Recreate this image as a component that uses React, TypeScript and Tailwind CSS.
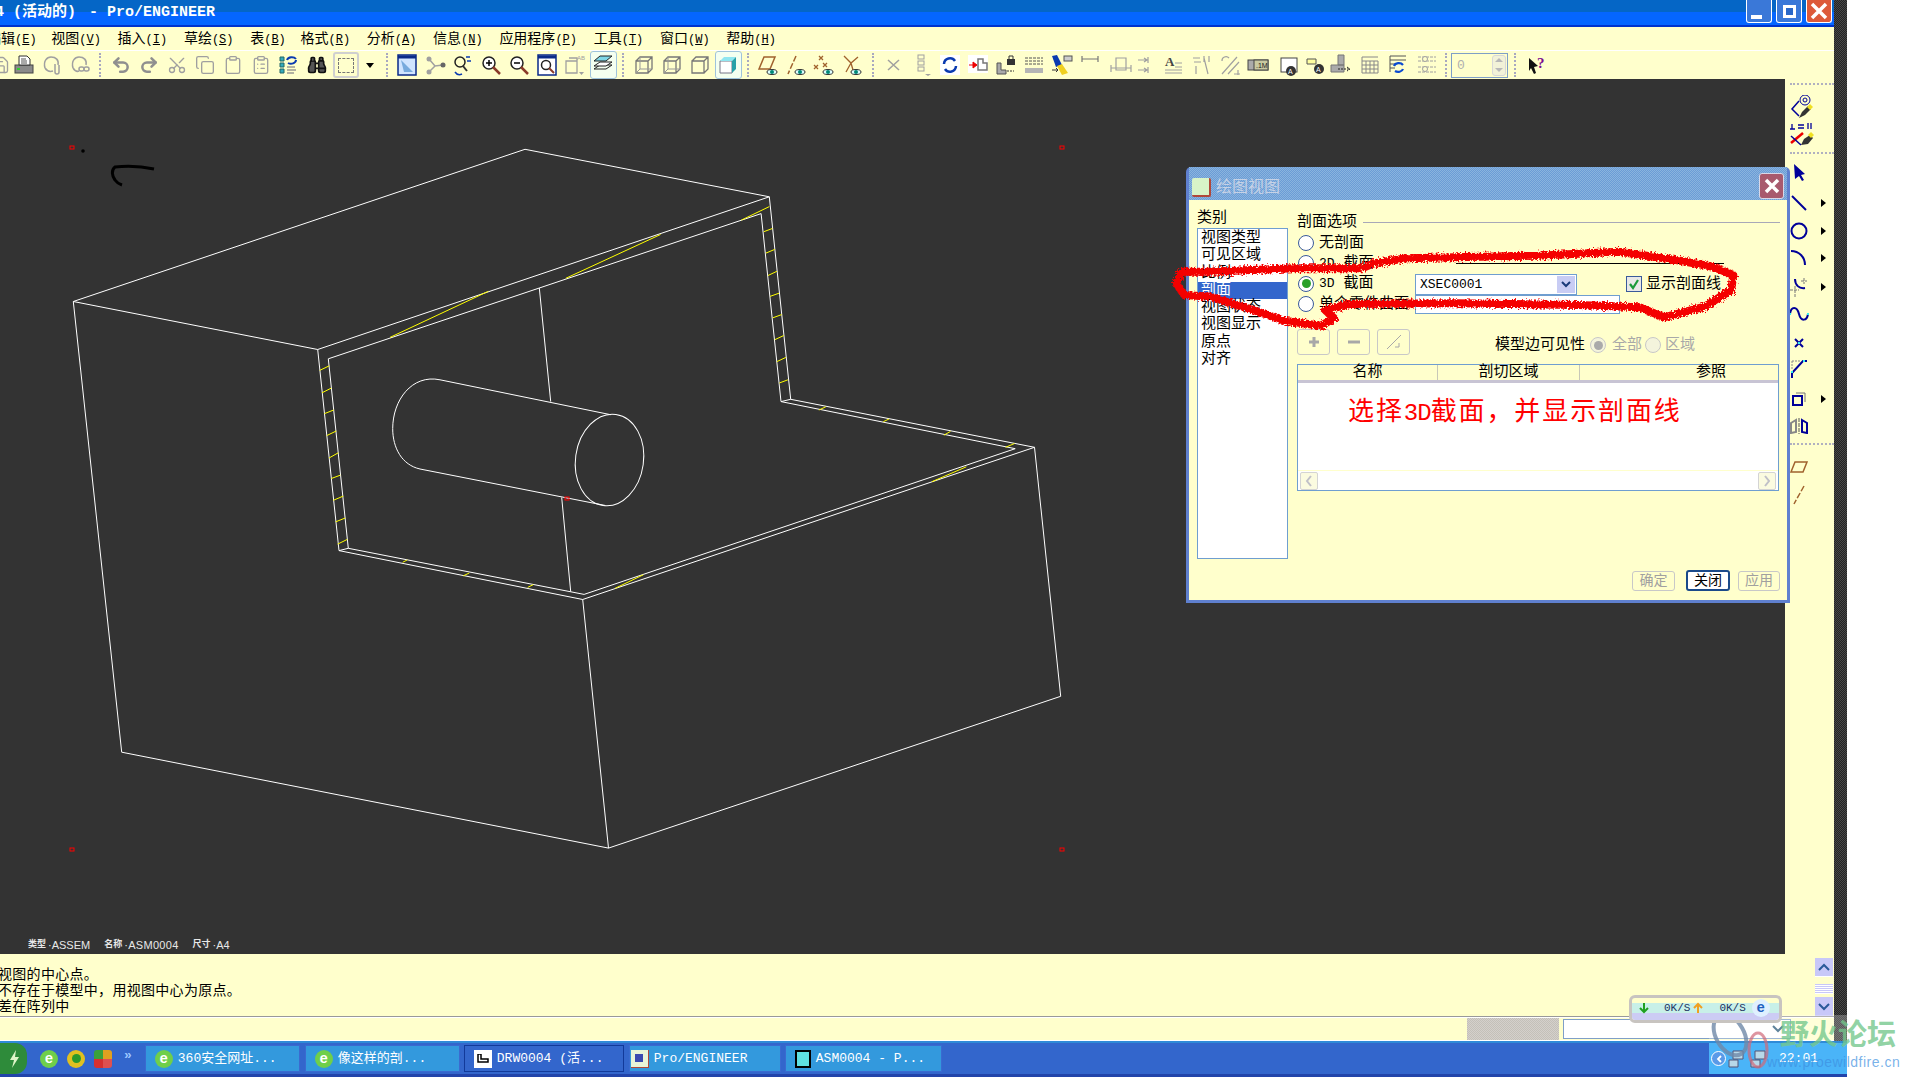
import type { ReactNode } from 'react'
import { Binoculars, ClipboardList, Clipboard, Copy, Redo2, Save, Scissors, Undo2 } from 'lucide-react'

// raw points were read off the zoomed crops, so keep the crop mapping
const a = (x: number, y: number) => `${(60 + x / 3).toFixed(1)},${(140 + y / 2.148).toFixed(1)}`
const b = (x: number, y: number) => `${(540 + x / 2.904).toFixed(1)},${(140 + y / 2.148).toFixed(1)}`

const whiteLines = [
  [a(40, 347), a(1395, 20), b(666, 122), b(728, 557), b(1436, 660), b(124, 987)],
  [a(40, 347), a(773, 450), b(666, 122)],
  [a(40, 347), a(185, 1315), b(199, 1521), b(1512, 1195), b(1436, 660)],
  [a(773, 450), a(837, 882), b(124, 987), b(199, 1521)],
  [a(805, 470), b(642, 158), b(700, 562), b(1380, 663), b(128, 976), a(865, 877), a(805, 470)],
  [a(837, 882), a(865, 877)],
  [b(700, 562), b(728, 557)],
  [a(1438, 318), a(1472, 562)],
  [a(1505, 768), a(1532, 970)],
]

const yellowLines = [
  [a(990, 424), a(1285, 325)],
  [b(75, 297), b(350, 203)],
  [b(585, 172), b(666, 143)],
  [a(779, 495), a(808, 485)],
  [a(786, 543), a(814, 533)],
  [a(793, 588), a(821, 580)],
  [a(800, 635), a(829, 625)],
  [a(807, 683), a(835, 672)],
  [a(814, 727), a(841, 720)],
  [a(820, 774), a(850, 765)],
  [a(827, 820), a(856, 812)],
  [a(833, 868), a(862, 858)],
  [a(1028, 907), a(1042, 902)],
  [a(1210, 936), a(1228, 930)],
  [a(1403, 961), a(1420, 955)],
  [b(650, 197), b(675, 190)],
  [b(656, 243), b(682, 235)],
  [b(662, 291), b(688, 282)],
  [b(668, 336), b(694, 329)],
  [b(676, 382), b(702, 375)],
  [b(682, 429), b(708, 420)],
  [b(688, 476), b(714, 467)],
  [b(695, 522), b(720, 515)],
  [b(810, 580), b(830, 573)],
  [b(997, 605), b(1014, 599)],
  [b(1173, 634), b(1192, 626)],
  [b(1352, 660), b(1378, 652)],
  [b(1138, 734), b(1238, 702)],
  [b(218, 963), b(300, 934)],
]

const scribble = [
  [470, 325], [300, 325], [100, 335], [30, 335], [15, 370], [35, 405], [100, 410], [190, 445], [280, 482], [370, 497], [402, 475], [380, 450],
  [440, 432], [700, 430], [1000, 435], [1150, 442], [1210, 472], [1310, 440], [1375, 390], [1380, 345], [1330, 320], [1240, 300], [1100, 275],
  [900, 287], [700, 292], [580, 295], [500, 310], [470, 325],
]
  .map(([x, y]) => `${(1170 + x / 2.45).toFixed(1)},${(160 + y / 3).toFixed(1)}`)
  .join(' ')

function Ic({ children, w = 22, h = 22 }: { children: ReactNode; w?: number; h?: number }) {
  return (
    <svg width={w} height={h} viewBox={`0 0 ${w} ${h}`} fill="none" className="shrink-0">
      {children}
    </svg>
  )
}

const G = '#a0a0a0'
const BROWN = '#a0622d'
const NAVY = '#000099'
const eye = (
  <g>
    <ellipse cx="15" cy="18" rx="5" ry="2.5" fill="#dff" stroke="#333" />
    <circle cx="15" cy="18" r="2" fill="#087" />
  </g>
)
const lens = (
  <g>
    <circle cx="9" cy="9" r="6" fill="#fff" stroke="#222" strokeWidth="1.5" />
    <path d="M13 13l7 7" stroke="#8a3b2a" strokeWidth="2.5" />
  </g>
)

function Slot({ children, w = 'w-7' }: { children: ReactNode; w?: string }) {
  return <div className={`flex h-full shrink-0 items-center justify-center ${w}`}>{children}</div>
}

function Sep({ m = 'mx-[6px]' }: { m?: string }) {
  return <div className={`h-[24px] w-[2px] shrink-0 border-l-2 border-dotted border-[#a8a8c0] ${m}`} />
}

function Toolbar() {
  const g = { size: 20, color: G, strokeWidth: 1.6 }
  return (
    <div className="flex h-[28px] items-center overflow-hidden bg-[#ffffcc]">
      <div className="w-[10px] shrink-0 overflow-hidden">
        <Save {...g} className="-ml-[10px]" />
      </div>
      <Slot w="w-[28px]">
        <Ic>
          <rect x="2" y="11" width="18" height="8" fill="#8a8a8a" stroke="#444" />
          <path d="M6 11V2h8l3 3v6z" fill="#fff" stroke="#333" />
          <path d="M8 5h5M8 7h6M8 9h6" stroke="#555" />
          <rect x="4" y="14" width="3" height="2" fill="#3c3" />
        </Ic>
      </Slot>
      <Slot>
        <Ic>
          <path d="M4 14C2 7 6 3 10 3c5 0 8 3 7 8" stroke={G} strokeWidth="1.5" />
          <path d="M14 10v8a2 2 0 004 0v-7" stroke={G} strokeWidth="1.5" />
          <path d="M4 14c2 3 5 4 8 3" stroke={G} strokeWidth="1.5" />
        </Ic>
      </Slot>
      <Slot>
        <Ic>
          <path d="M4 14C2 7 6 3 10 3c5 0 8 3 7 8" stroke={G} strokeWidth="1.5" />
          <rect x="10" y="13" width="5" height="4" rx="2" stroke={G} strokeWidth="1.5" />
          <rect x="15" y="13" width="5" height="4" rx="2" stroke={G} strokeWidth="1.5" />
          <path d="M4 14c2 3 4 4 6 3" stroke={G} strokeWidth="1.5" />
        </Ic>
      </Slot>
      <Sep m="ml-[5px] mr-[6px]" />
      <Slot>
        <Undo2 size={20} color="#8f8f8f" strokeWidth={3} />
      </Slot>
      <Slot>
        <Redo2 size={20} color="#8f8f8f" strokeWidth={3} />
      </Slot>
      <Slot>
        <Scissors {...g} className="-rotate-90" />
      </Slot>
      <Slot>
        <Copy {...g} />
      </Slot>
      <Slot>
        <Clipboard {...g} />
      </Slot>
      <Slot>
        <ClipboardList {...g} />
      </Slot>
      <Slot>
        <Ic>
          <path d="M2 3h4v4H2zM2 9h4v4H2zM2 15h4v4H2z" fill="#3ab" stroke="#266" />
          <path d="M9 13h8M9 16h9M9 19h7" stroke="#667" />
          <path d="M9 6a5 4 0 019-1M18 6a5 4 0 01-8 3" stroke="#0a3ab0" strokeWidth="2" />
        </Ic>
      </Slot>
      <Slot>
        <Binoculars size={20} color="#111" fill="#555" strokeWidth={2} />
      </Slot>
      <Slot w="w-[30px]">
        <div className="flex h-[26px] w-[26px] items-center justify-center rounded-[3px] border-2 border-[#d0d0d0]">
          <div className="h-[15px] w-[16px] border border-dashed border-[#777]" />
        </div>
      </Slot>
      <Slot w="w-[18px]">
        <span className="h-0 w-0 border-x-[4px] border-t-[5px] border-x-transparent border-t-black" />
      </Slot>
      <Sep m="ml-[7px] mr-[5px]" />
      <Slot>
        <Ic>
          <rect x="2" y="1" width="18" height="20" fill="#cfe4ff" stroke="#0a2a88" strokeWidth="1.5" />
          <path d="M2 3h18" stroke="#0a2a88" strokeWidth="3" />
          <path d="M5 6l12 12H8z" fill="#7ad" />
        </Ic>
      </Slot>
      <Slot>
        <Ic>
          <path d="M5 5l6 7 8-1M11 12l-6 6" stroke={G} strokeWidth="1.5" />
          <circle cx="5" cy="5" r="2.5" fill={G} />
          <circle cx="5" cy="18" r="2.5" fill={G} />
          <circle cx="19" cy="11" r="2.5" fill="#666" />
        </Ic>
      </Slot>
      <Slot>
        <Ic>
          <circle cx="8" cy="8" r="5" stroke="#222" strokeWidth="1.5" />
          <path d="M11 12l4 5" stroke="#333" strokeWidth="2" />
          <path d="M14 3h4M15 7h4M3 18c2 3 5 3 7 2" stroke="#0a3ab0" strokeWidth="1.5" />
        </Ic>
      </Slot>
      <Slot>
        <Ic>
          {lens}
          <path d="M6 9h6M9 6v6" stroke="#000" strokeWidth="1.5" />
        </Ic>
      </Slot>
      <Slot>
        <Ic>
          {lens}
          <path d="M6 9h6" stroke="#000" strokeWidth="1.5" />
        </Ic>
      </Slot>
      <Slot>
        <Ic>
          <rect x="2" y="1" width="18" height="20" fill="#fff" stroke="#0a2a88" strokeWidth="1.5" />
          <path d="M2 3h18" stroke="#0a2a88" strokeWidth="3" />
          <circle cx="10" cy="11" r="4.5" fill="#fff" stroke="#222" strokeWidth="1.5" />
          <path d="M13 14l5 5" stroke="#8a3b2a" strokeWidth="2" />
        </Ic>
      </Slot>
      <Slot>
        <Ic>
          <path d="M2 7h11v12H2zM5 4h8v3" stroke={G} strokeWidth="1.3" />
          <text x="13" y="6" fontSize="6" fill={G} fontFamily="Liberation Sans">AB</text>
          <path d="M15 18h5l-2.500 3z" fill={G} />
        </Ic>
      </Slot>
      <Slot>
        <div className="flex h-[28px] w-[27px] items-center justify-center rounded-[3px] border border-[#9fc3dc] bg-[#f4fff0]">
          <Ic>
            <path d="M2 15l6-4h12l-6 4z" stroke="#222" />
            <path d="M2 12l6-4h12l-6 4z" fill="#fff" stroke="#222" />
            <path d="M2 7l6-5h12l-6 5z" fill="#7fd6e6" stroke="#222" />
          </Ic>
        </div>
      </Slot>
      <Sep m="ml-[5px] mr-[6px]" />
      {[0, 1, 2].map((i) => (
        <Slot key={i}>
          <Ic>
            <path d="M3 7h12v12H3zM3 7l4-4h12v12l-4 4M15 7l4-4" stroke="#777" strokeWidth="1.3" />
            {i < 2 ? <path d="M7 3v12h12M7 15l-4 4" stroke="#999" /> : null}
          </Ic>
        </Slot>
      ))}
      <Slot>
        <div className="flex h-[28px] w-[27px] items-center justify-center rounded-[3px] border border-[#9fc3dc] bg-[#f4fff0]">
          <Ic>
            <path d="M3 7h12v12H3z" fill="#fff" stroke="#778" />
            <path d="M3 7l4-4h12l-4 4z" fill="#8fe6f0" />
            <path d="M15 7l4-4v12l-4 4z" fill="#27a0a8" />
          </Ic>
        </div>
      </Slot>
      <Sep m="mx-[5px]" />
      <Slot>
        <Ic>
          <path d="M7 3h11l-5 12H2z" stroke={BROWN} strokeWidth="1.500" />
          {eye}
        </Ic>
      </Slot>
      <Slot>
        <Ic>
          <path d="M11 2L3 20" stroke={BROWN} strokeWidth="1.500" strokeDasharray="6 2" />
          {eye}
        </Ic>
      </Slot>
      <Slot>
        <Ic>
          <path d="M6 2l4 4M10 2L6 6M10 9l4 4M14 9l-4 4M1 11l4 4M5 11l-4 4" stroke={BROWN} strokeWidth="1.300" />
          {eye}
        </Ic>
      </Slot>
      <Slot>
        <Ic>
          <path d="M3 2l7 7 7-6M10 9l-5 9M10 9l2 7" stroke={BROWN} strokeWidth="1.300" />
          {eye}
        </Ic>
      </Slot>
      <Sep m="mx-[6px]" />
      <Slot>
        <Ic>
          <path d="M5 6l11 10M16 6L5 16" stroke={G} strokeWidth="1.500" />
        </Ic>
      </Slot>
      <Slot>
        <Ic>
          <rect x="7" y="1" width="6" height="4" stroke={G} />
          <rect x="7" y="7" width="6" height="4" stroke={G} />
          <rect x="7" y="13" width="6" height="4" stroke={G} />
          <path d="M14 20h6l-3 2z" fill={G} />
        </Ic>
      </Slot>
      <Slot>
        <Ic w={20} h={20}>
          <rect width="20" height="20" fill="#fff" />
          <path d="M4 9a6 6 0 0111-3M16 11a6 6 0 01-11 3" stroke="#0a3ab0" strokeWidth="2.500" />
        </Ic>
      </Slot>
      <Slot>
        <Ic w={20} h={20}>
          <rect width="20" height="18" fill="#fff" />
          <path d="M10 4h5v4h4v7H10z" stroke="#777" strokeWidth="1.500" />
          <path d="M1 10h6M5 7l4 3-4 3z" fill="#e00" stroke="#e00" />
        </Ic>
      </Slot>
      <Slot>
        <Ic>
          <path d="M2 9v11h9v-4H6V9z" fill="#aaa" stroke="#555" />
          <rect x="12" y="5" width="8" height="6" fill="#333" />
          <path d="M14 5V2h4v3" stroke="#333" />
          <path d="M12 17h7" stroke="#333" strokeDasharray="2 1" />
        </Ic>
      </Slot>
      <Slot>
        <Ic>
          <path d="M2 4h18M2 7h18M2 10h18" stroke="#555" strokeDasharray="3 1" />
          <rect x="2" y="14" width="18" height="5" fill="#b5b5b5" />
        </Ic>
      </Slot>
      <Slot>
        <Ic>
          <path d="M1 2l5-1 5 10-6 2z" fill="#0a3ab0" />
          <path d="M6 12l5-2 6 9-6 2z" fill="#f0d020" />
          <rect x="13" y="2" width="8" height="5" fill="#ccc" stroke="#555" />
          <path d="M1 16h6M5 14l2 2-2 2" stroke="#333" />
        </Ic>
      </Slot>
      <Slot w="w-[28px]">
        <Ic>
          <path d="M3 5h16M3 2v6M19 2v6" stroke="#777" strokeWidth="1.200" />
        </Ic>
      </Slot>
      <Slot w="w-[34px]">
        <Ic>
          <path d="M1 14h20M1 11v7M21 11v7M6 4h10v12H6z" stroke={G} strokeWidth="1.200" />
        </Ic>
      </Slot>
      <Slot w="w-[10px]">
        <Ic w={12} h={20}>
          <path d="M1 5h9M1 15h9M11 2v6M11 12v6M7 3l3 2-3 2M7 13l3 2-3 2" stroke={G} strokeWidth="1.200" />
        </Ic>
      </Slot>
      <Slot w="w-[24px] ml-[12px]">
        <Ic>
          <text x="4" y="12" fontSize="13" fontWeight="bold" fill="#444" fontFamily="Liberation Serif">A</text>
          <path d="M14 9h7M14 13h7M4 16h17M4 19h17" stroke={G} />
        </Ic>
      </Slot>
      <Slot w="w-[36px]">
        <Ic>
          <path d="M2 4h7M3 8h7M5 12v8M13 4l4 16M13 2v6M18 2v6" stroke={G} strokeWidth="1.200" />
        </Ic>
      </Slot>
      <Slot w="w-[20px]">
        <Ic>
          <path d="M3 20L18 3M9 20L20 8M3 7a4 4 0 017-3M15 20h6M19 16v5" stroke={G} strokeWidth="1.200" />
        </Ic>
      </Slot>
      <Slot w="w-[36px]">
        <Ic>
          <rect x="1" y="6" width="20" height="10" fill="#aaa" stroke="#444" />
          <rect x="7" y="6" width="14" height="10" fill="#c9c9a0" stroke="#444" />
          <text x="9" y="14" fontSize="7" fill="#222" fontFamily="Liberation Sans">.1M</text>
        </Ic>
      </Slot>
      <Slot w="w-[28px]">
        <Ic>
          <rect x="2" y="4" width="16" height="14" fill="#fff" stroke="#444" />
          <circle cx="12" cy="17" r="5" fill="#333" />
          <text x="9" y="20" fontSize="7" fill="#fff" fontFamily="Liberation Sans">A</text>
        </Ic>
      </Slot>
      <Slot w="w-[22px]">
        <Ic>
          <path d="M3 5h9v5H3z" fill="#ffffa0" stroke="#555" />
          <circle cx="15" cy="15" r="5" fill="#333" />
          <text x="12" y="18" fontSize="7" fill="#fff" fontFamily="Liberation Sans">A</text>
        </Ic>
      </Slot>
      <Slot w="w-[30px]">
        <Ic>
          <path d="M8 1h6v10h-6zM1 11h13v7H1z" fill="#aaa" stroke="#777" />
          <path d="M8 15h11M17 13l3 2-3 2" stroke="#222" strokeDasharray="2 1" />
        </Ic>
      </Slot>
      <Slot w="w-[28px]">
        <Ic w={18} h={18}>
          <path d="M1 1h16M1 17V1M5 5v12M9 5v12M13 5v12M17 5v12M1 5h16M1 9h16M1 13h16M1 17h16" stroke="#888" />
        </Ic>
      </Slot>
      <Slot w="w-[28px]">
        <Ic w={18} h={20}>
          <path d="M1 1h16M1 17V1M1 5h16M1 9h5M1 13h5" stroke="#555" />
          <path d="M5 11a5 4 0 019-1M14 14a5 4 0 01-8 2" stroke="#0a4ad0" strokeWidth="2.200" />
        </Ic>
      </Slot>
      <Slot w="w-[30px]">
        <Ic>
          <path d="M2 3h18M2 7h18M2 13h18M2 18h18" stroke={G} strokeDasharray="3 1" />
          <circle cx="9" cy="5" r="2.500" fill="#ffffcc" stroke={G} />
          <circle cx="9" cy="15" r="2.500" fill="#ffffcc" stroke={G} />
        </Ic>
      </Slot>
      <Sep m="ml-[3px] mr-[4px]" />
      <div className="flex h-[25px] w-[57px] shrink-0 items-center justify-between border border-[#7f9fc8] pr-[1px] pl-[5px] text-[13px] text-[#b0b0b0]">
        0
        <div className="flex h-[21px] w-[14px] flex-col items-center justify-around rounded-[3px] border border-[#d8d8d8] bg-[#f2f2d8]">
          <span className="h-0 w-0 border-x-[4px] border-b-[4px] border-x-transparent border-b-[#b8b8b8]" />
          <span className="h-0 w-0 border-x-[4px] border-t-[4px] border-x-transparent border-t-[#b8b8b8]" />
        </div>
      </div>
      <Sep m="mx-[6px]" />
      <div className="ml-[5px]">
        <Ic w={20} h={20}>
          <path d="M2 3l9 8-4 1 2 6-2 1-3-6-2 3z" fill="#111" />
          <text x="10" y="13" fontSize="15" fontWeight="bold" fill="#7a0a90" fontFamily="Liberation Serif">?</text>
        </Ic>
      </div>
    </div>
  )
}

const menus: [string, string][] = [
  ['视图', 'V'],
  ['插入', 'I'],
  ['草绘', 'S'],
  ['表', 'B'],
  ['格式', 'R'],
  ['分析', 'A'],
  ['信息', 'N'],
  ['应用程序', 'P'],
  ['工具', 'T'],
  ['窗口', 'W'],
  ['帮助', 'H'],
]

function MenuLabel({ text, k }: { text: string; k: string }) {
  return (
    <span className={k === 'B' ? '-mr-[2px] whitespace-nowrap' : 'whitespace-nowrap'}>
      {text}
      <span className="text-[12px]">
        (<span className="underline">{k}</span>)
      </span>
    </span>
  )
}

function Radio({ on, off }: { on?: boolean; off?: boolean }) {
  return (
    <span
      className={`flex h-[16px] w-[16px] shrink-0 items-center justify-center rounded-full border ${
        off ? 'border-[#c8c8c8] bg-[#f4f4dc]' : 'border-[#3a5a9a] bg-white'
      }`}
    >
      {on ? <span className={`h-[9px] w-[9px] rounded-full ${off ? 'bg-[#aaa]' : 'bg-[#2aa02a]'}`} /> : null}
    </span>
  )
}

const listItems = ['视图类型', '可见区域', '比例', '剖面', '视图状态', '视图显示', '原点', '对齐']

function Dialog() {
  return (
    <div className="absolute top-[167px] left-[1186px] flex h-[436px] w-[604px] flex-col rounded-t-[5px] border-x-[3px] border-b-[3px] border-[#5f80cf] bg-[#ffffcc] text-[15px] text-black">
      <div className="flex h-[33px] shrink-0 items-center bg-[repeating-conic-gradient(#6b9cd6_0_25%,#8ab4de_0_50%)] bg-[length:2px_2px] pt-[5px] pl-[3px]">
        <span className="mt-[2px] h-[19px] w-[19px] rounded-[2px] border-r-2 border-b-2 border-[#b0483a] bg-[#d8f4c8]" />
        <span className="mt-[3px] ml-[5px] text-[16px] text-[#c6d2e6]">绘图视图</span>
        <span className="mr-[3px] ml-auto flex h-[26px] w-[25px] items-center justify-center rounded-[3px] border border-[#d8d8e8] bg-[#a85a6e]">
          <svg width="18" height="18" viewBox="0 0 18 18">
            <path d="M3 3l12 12M15 3L3 15" stroke="#fff" strokeWidth="3.500" />
          </svg>
        </span>
      </div>
      <div className="flex flex-1 pl-[8px]">
        <div className="mt-[8px] w-[91px] shrink-0">
          <div className="h-[20px] pt-px leading-[20px]">类别</div>
          <div className="h-[331px] border border-[#6f9ed0] bg-white pt-px leading-[17.300px]">
            {listItems.map((t, i) => (
              <div key={t} className={i === 3 ? 'bg-[#3366cc] pl-[3px] text-white' : 'pl-[3px]'}>
                {t}
              </div>
            ))}
          </div>
        </div>
        <div className="ml-[9px] w-[483px]">
          <div className="mt-[13px] flex h-[20px] items-center pb-[2px]">
            剖面选项
            <div className="ml-[6px] h-0 flex-1 border-t border-[#a8a8b8]" />
          </div>
          <div className="flex h-[20px] items-center pl-[1px]">
            <Radio />
            <span className="ml-[5px]">无剖面</span>
          </div>
          <div className="relative flex h-[20px] items-center pl-[1px]">
            <Radio />
            <span className="ml-[5px]">
              <span className="text-[13px]">2D</span> 截面
            </span>
            <div className="absolute top-[10px] left-[159px] w-[268px] border-t border-black" />
          </div>
          <div className="flex h-[21px] items-center pl-[1px]">
            <Radio on />
            <span className="ml-[5px] w-[96px]">
              <span className="text-[13px]">3D</span> 截面
            </span>
            <div className="mt-[2px] flex h-[21px] w-[162px] items-center justify-between border border-[#6f9ed0] bg-white pr-px pl-[4px] text-[13px]">
              XSEC0001
              <span className="flex h-[17px] w-[18px] items-center justify-center bg-[#c8ccf4]">
                <svg width="10" height="8" viewBox="0 0 10 8">
                  <path d="M1 1l4 4 4-4" stroke="#1a3a7a" strokeWidth="2" fill="none" />
                </svg>
              </span>
            </div>
            <span className="mt-px ml-[49px] flex h-[16px] w-[16px] items-center justify-center border border-[#3a5a9a] bg-[#e8e8e8]">
              <svg width="12" height="12" viewBox="0 0 12 12">
                <path d="M2 6l3 4 5-8" stroke="#1a9a3a" strokeWidth="2.200" fill="none" />
              </svg>
            </span>
            <span className="mt-px ml-[4px]">显示剖面线</span>
          </div>
          <div className="flex h-[20px] items-center pl-[1px]">
            <Radio />
            <span className="ml-[5px] w-[96px] whitespace-nowrap">单个零件曲面</span>
            <div className="h-[19px] w-[205px] border border-[#6f9ed0] bg-white" />
          </div>
          <div className="mt-[15px] flex h-[26px] items-center">
            <span className="flex h-[26px] w-[33px] items-center justify-center rounded-[3px] border border-[#c8c8c8] text-[#a0a0a0]">
              <svg width="12" height="12" viewBox="0 0 12 12">
                <path d="M6 1v10M1 6h10" stroke="#a8a8a8" strokeWidth="3" />
              </svg>
            </span>
            <span className="ml-[7px] flex h-[26px] w-[33px] items-center justify-center rounded-[3px] border border-[#c8c8c8]">
              <svg width="12" height="6" viewBox="0 0 12 6">
                <path d="M0 3h12" stroke="#a8a8a8" strokeWidth="3" />
              </svg>
            </span>
            <span className="ml-[7px] flex h-[26px] w-[33px] items-center justify-center rounded-[3px] border border-[#c8c8c8]">
              <svg width="18" height="18" viewBox="0 0 18 18">
                <path d="M2 16L16 2M10 14h4v-4" stroke="#a8a8a8" fill="none" />
              </svg>
            </span>
            <div className="flex items-center pt-[6px]">
              <span className="ml-[85px]">模型边可见性</span>
              <span className="ml-[5px]">
                <Radio on off />
              </span>
              <span className="ml-[6px] text-[#a8a8a8]">全部</span>
              <span className="ml-[3px]">
                <Radio off />
              </span>
              <span className="ml-[4px] text-[#a8a8a8]">区域</span>
            </div>
          </div>
          <div className="mt-[9px] flex h-[127px] w-[482px] flex-col border border-[#6f9ed0]">
            <div className="flex h-[18px] shrink-0 items-center border-b-[3px] border-[#c8c4d4] text-center leading-none">
              <span className="w-[140px] border-r border-[#c8c8b8]">名称</span>
              <span className="w-[142px] border-r border-[#c8c8b8]">剖切区域</span>
              <span className="flex-1 pl-[64px]">参照</span>
            </div>
            <div className="flex-1 bg-white pt-[14px] pl-[50px] text-[26px] leading-[32px] tracking-[1.900px] whitespace-nowrap text-[#ff0000]">
              选择<span className="text-[24px] tracking-[-1px]">3D</span>截面，并显示剖面线
            </div>
            <div className="flex h-[20px] shrink-0 items-center justify-between border-t border-[#ffffcc] bg-white px-[2px]">
              {['M7 2L3 7l4 5', 'M3 2l4 5-4 5'].map((d) => (
                <span key={d} className="flex h-[18px] w-[18px] items-center justify-center rounded-[2px] border border-[#d4d4d4] bg-[#fbfbe0]">
                  <svg width="10" height="14" viewBox="0 0 10 14">
                    <path d={d} stroke="#c0c0c8" strokeWidth="2" fill="none" />
                  </svg>
                </span>
              ))}
            </div>
          </div>
          <div className="mt-[79px] flex items-center justify-end text-[14px]">
            <span className="flex h-[20px] w-[43px] items-center justify-center rounded-[3px] border border-[#c8c8c8] text-[#a0a0a0]">确定</span>
            <span className="ml-[11px] flex h-[21px] w-[44px] items-center justify-center rounded-[3px] border-2 border-[#1a4a8a] bg-white">关闭</span>
            <span className="ml-[8px] flex h-[20px] w-[42px] items-center justify-center rounded-[3px] border border-[#c8c8c8] text-[#a0a0a0]">应用</span>
          </div>
        </div>
      </div>
    </div>
  )
}

function SideRow({ children, arrow, m = '' }: { children: ReactNode; arrow?: boolean; m?: string }) {
  return (
    <div className={`flex h-7 items-center ${m}`}>
      <span className="flex w-[22px] justify-center">{children}</span>
      {arrow ? <span className="ml-[11px] h-0 w-0 border-y-[4px] border-l-[5px] border-y-transparent border-l-black" /> : null}
    </div>
  )
}

function SideDots() {
  return <div className="ml-[2px] w-[44px] border-t-2 border-dotted border-[#b0b0c0]" />
}

function RightBar() {
  const st = { stroke: NAVY, strokeWidth: 2, fill: 'none' }
  return (
    <div className="flex w-[49px] shrink-0 flex-col items-start bg-[#ffffcc] pl-[3px]">
      <div className="mt-[4px]">
        <SideDots />
      </div>
      <div className="mt-[10px] ml-[2px]">
        <svg width="24" height="24" viewBox="0 0 24 24" fill="none">
          <path d="M9 6L2 14l7 7" stroke={NAVY} strokeWidth="1.500" />
          <circle cx="15" cy="5" r="5" stroke={NAVY} />
          <circle cx="15" cy="5" r="2" stroke={NAVY} />
          <path d="M9 23l3-6 6-6 3 3-6 6z" fill="#333" />
          <path d="M17 12l3-3 3 3-3 3z" fill="#f0e020" />
        </svg>
      </div>
      <div className="mt-[3px] ml-[2px]">
        <svg width="24" height="24" viewBox="0 0 24 24" fill="none">
          <path d="M2 2v5M0 7h5M8 3h6M8 6h6M18 1v6M21 1v6" stroke={NAVY} strokeWidth="1.300" />
          <path d="M1 21L13 11" stroke="#e00" strokeWidth="2.500" />
          <path d="M1 14l10 9" stroke={NAVY} strokeWidth="1.500" />
          <path d="M11 23l3-6 6-4 3 3-5 6z" fill="#333" />
          <path d="M18 13l3-3 3 3-3 3z" fill="#f0e020" />
        </svg>
      </div>
      <div className="mt-[6px]">
        <SideDots />
      </div>
      <div className="mt-[4px] flex flex-col">
        <SideRow>
          <svg width="14" height="18" viewBox="0 0 14 18">
            <path d="M2 1l11 10-4 1 3 5-2 1-3-5-4 3z" fill={NAVY} />
          </svg>
        </SideRow>
        <SideRow arrow m="mt-[3px]">
          <svg width="18" height="18" viewBox="0 0 18 18">
            <path d="M2 2l14 14" {...st} />
          </svg>
        </SideRow>
        <SideRow arrow>
          <svg width="18" height="18" viewBox="0 0 18 18">
            <circle cx="9" cy="9" r="7.500" {...st} />
          </svg>
        </SideRow>
        <SideRow arrow m="-mt-px">
          <svg width="18" height="18" viewBox="0 0 18 18">
            <path d="M1 2c8 0 14 6 14 14" {...st} />
          </svg>
        </SideRow>
        <SideRow arrow m="mt-px">
          <svg width="18" height="20" viewBox="0 0 18 20">
            <path d="M5 2c0 6 4 10 10 9" {...st} />
            <path d="M0 13h9M5 9v11M14 1v6M11 4h6" stroke="#777" strokeWidth="1" strokeDasharray="3 1" />
          </svg>
        </SideRow>
        <SideRow m="-mt-px">
          <svg width="20" height="16" viewBox="0 0 20 16">
            <path d="M1 8c1-8 7-8 9 0s8 7 9 0" {...st} />
            <path d="M0 7h2v2H0zM18 7h2v2h-2z" fill="#3ee" />
          </svg>
        </SideRow>
        <SideRow m="mt-px">
          <svg width="10" height="10" viewBox="0 0 10 10">
            <path d="M1 1l8 8M9 1L1 9" {...st} />
            <path d="M4 4h2v2H4z" fill="#3ee" />
          </svg>
        </SideRow>
        <SideRow m="-mt-[2px]">
          <svg width="18" height="18" viewBox="0 0 18 18">
            <path d="M2 1h8M2 1v9" stroke="#888" fill="none" strokeDasharray="2 1" />
            <path d="M17 1h-4L2 13v5" {...st} />
            <path d="M1 11h2v2H1zM13 0h2v2h-2z" fill="#3ee" />
          </svg>
        </SideRow>
        <SideRow arrow m="mt-[2px]">
          <svg width="14" height="14" viewBox="0 0 14 14">
            <path d="M4 1h9v9" stroke="#777" fill="none" />
            <path d="M1 4h9v9H1z" {...st} />
          </svg>
        </SideRow>
        <SideRow m="-mt-px">
          <svg width="18" height="16" viewBox="0 0 18 16">
            <path d="M1 5l5-3v12l-5 1z" stroke="#888" strokeWidth="2" fill="none" />
            <path d="M12 2l5 3v10l-5-1z" {...st} />
            <path d="M9 0v16" stroke="#555" strokeDasharray="4 1" />
          </svg>
        </SideRow>
      </div>
      <div className="mt-[3px]">
        <SideDots />
      </div>
      <div className="mt-[8px] flex flex-col">
        <SideRow>
          <svg width="18" height="12" viewBox="0 0 18 12">
            <path d="M5 1h12l-4 10H1z" stroke={BROWN} strokeWidth="1.500" fill="none" />
          </svg>
        </SideRow>
        <SideRow>
          <svg width="12" height="20" viewBox="0 0 12 20">
            <path d="M11 1L1 19" stroke={BROWN} strokeWidth="1.500" strokeDasharray="6 2" />
          </svg>
        </SideRow>
      </div>
    </div>
  )
}

function QuickE() {
  return (
    <span className="flex h-[18px] w-[18px] items-center justify-center rounded-full bg-[#6fcf4a] text-[14px] leading-none font-bold text-white">
      e
    </span>
  )
}

function TaskBtn({ icon, label, active }: { icon: ReactNode; label: string; active?: boolean }) {
  return (
    <div
      className={`flex h-[27px] items-center gap-[5px] border pl-[9px] text-[13px] whitespace-nowrap text-white ${
        active ? 'border-[#123a9a] bg-[#3366cc]' : 'border-[#3a6ad0] bg-[#3399dd]'
      }`}
    >
      {icon}
      {label}
    </div>
  )
}

function Taskbar() {
  return (
    <div className="relative flex h-[36px] w-[1847px] items-center border-t-2 border-b-[3px] border-t-[#2f8ad8] border-b-[#2244aa] bg-[#3366cc]">
      <div className="flex h-full w-[27px] items-center justify-center rounded-r-[12px] bg-[#2e8b3a]">
        <svg width="14" height="20" viewBox="0 0 14 20">
          <path d="M9 1L3 11h4l-2 8 7-11H8z" fill="#dff5c8" />
        </svg>
      </div>
      <div className="ml-[13px] flex items-center gap-[9px]">
        <QuickE />
        <span className="flex h-[18px] w-[18px] items-center justify-center rounded-full bg-[#e0c020]">
          <span className="h-[9px] w-[9px] rounded-full bg-[#2a9a2a]" />
        </span>
        <span className="grid h-[18px] w-[18px] grid-cols-2 overflow-hidden rounded-[3px]">
          <span className="bg-[#3aa03a]" />
          <span className="bg-[#e0a020]" />
          <span className="bg-[#d83030]" />
          <span className="bg-[#e05050]" />
        </span>
      </div>
      <span className="mb-[6px] ml-[12px] text-[13px] leading-none font-bold text-[#9fc8ff]">»</span>
      <div className="ml-[13px] flex items-center">
        <div className="w-[155px]">
          <TaskBtn icon={<QuickE />} label="360安全网址..." />
        </div>
        <div className="ml-[5px] w-[155px]">
          <TaskBtn icon={<QuickE />} label="像这样的剖..." />
        </div>
        <div className="ml-[4px] w-[160px]">
          <TaskBtn
            active
            icon={
              <span className="flex h-[18px] w-[18px] items-center justify-center bg-white">
                <svg width="12" height="10" viewBox="0 0 12 10">
                  <path d="M1 0v8h10V5H4V0z" fill="none" stroke="#000" strokeWidth="1.500" />
                </svg>
              </span>
            }
            label="DRW0004 (活..."
          />
        </div>
        <div className="ml-[5px] w-[152px]">
          <TaskBtn
            icon={
              <span className="-ml-[8px] flex h-[18px] w-[18px] items-center justify-center border-r border-b border-[#b0483a] bg-[#e8f4d8]">
                <span className="h-[8px] w-[8px] bg-[#3a4ab0]" />
              </span>
            }
            label="Pro/ENGINEER"
          />
        </div>
        <div className="ml-[4px] w-[157px]">
          <TaskBtn icon={<span className="h-[18px] w-[16px] border-2 border-black bg-[#5fe0e0]" />} label="ASM0004 - P..." />
        </div>
      </div>
      <div className="absolute top-0 right-0 bottom-0 flex w-[138px] items-center bg-[#4ab4f8] pl-[2px]">
        <span className="flex h-[15px] w-[15px] items-center justify-center rounded-full border border-white bg-[#5a9ae8]">
          <svg width="6" height="8" viewBox="0 0 6 8">
            <path d="M5 1L2 4l3 3" stroke="#fff" strokeWidth="1.800" fill="none" />
          </svg>
        </span>
        <svg width="50" height="22" viewBox="0 0 50 22" className="ml-[2px]">
          <path d="M1 12h9v7H1zM5 3h10v8H5z" fill="#b8d8e8" stroke="#557" />
          <path d="M23 12h9v7h-9zM27 3h10v8H27z" fill="#b8d8e8" stroke="#557" />
        </svg>
        <span className="ml-[1px] text-[13px] text-white">22:01</span>
      </div>
    </div>
  )
}

export default function App() {
  return (
    <div className="relative h-[1080px] w-[1920px] overflow-hidden bg-white font-['Liberation_Mono','Noto_Sans_CJK_SC',monospace] text-[14px] leading-none text-black">
      <div className="flex h-[1041px] w-[1847px]">
        <div className="flex w-[1834px] flex-col">
          <div className="flex h-[27px] shrink-0 items-center overflow-hidden border-b-2 border-[#0033cc] bg-[linear-gradient(#0566c6_0_12px,#0566ff_12px)]">
            <span className="-ml-[5px] text-[15px] font-bold whitespace-nowrap text-white">
              <span className="mr-[4px]">4 (活动的)</span> - Pro/ENGINEER
            </span>
            <div className="mr-[2px] ml-auto flex gap-[4px] self-start">
              <span className="flex h-[23px] w-[26px] items-end rounded-b-[3px] border border-t-0 border-white bg-[#3a78d8] pb-[3px] pl-[4px]">
                <span className="h-[4px] w-[11px] bg-white" />
              </span>
              <span className="flex h-[23px] w-[26px] items-center justify-center rounded-b-[3px] border border-t-0 border-white bg-[#3a78d8]">
                <span className="h-[13px] w-[13px] border-[3px] border-white bg-[#2a68c8]" />
              </span>
              <span className="flex h-[23px] w-[26px] items-center justify-center rounded-b-[3px] border border-t-0 border-white bg-[#dd5a3a]">
                <svg width="18" height="18" viewBox="0 0 18 18">
                  <path d="M2 2l14 14M16 2L2 16" stroke="#fff" strokeWidth="3.500" />
                </svg>
              </span>
            </div>
          </div>
          <div className="flex h-[23px] shrink-0 items-center gap-[16.700px] overflow-hidden bg-[#ffffcc] whitespace-nowrap">
            <span className="-mr-[2px] -ml-[13px]">
              <MenuLabel text="编辑" k="E" />
            </span>
            {menus.map(([t, k]) => (
              <MenuLabel key={k} text={t} k={k} />
            ))}
          </div>
          <div className="h-[1px] shrink-0 bg-white" />
          <Toolbar />
          <div className="flex h-[875px] shrink-0">
            <div className="relative flex-1 bg-[#333333]">
              <svg width="1785" height="875" viewBox="0 79 1785 875" className="block">
                {whiteLines.map((p, i) => (
                  <polyline key={i} points={p.join(' ')} fill="none" stroke="#ffffff" strokeWidth="1" />
                ))}
                <path
                  d="M610.600 414.700L440 379.800C412 374 392.700 400 392.700 428.600C392.700 448 402 465 420 469L605.400 505.500"
                  fill="none"
                  stroke="#fff"
                />
                <ellipse cx="609.500" cy="460" rx="34" ry="46" transform="rotate(8 609.500 460)" fill="none" stroke="#fff" />
                {yellowLines.map((p, i) => (
                  <polyline key={i} points={p.join(' ')} fill="none" stroke="#ffff00" strokeWidth="1" />
                ))}
                {[
                  [70, 146],
                  [70, 848],
                  [565, 497],
                  [1060, 146],
                  [1060, 848],
                ].map(([x, y]) => (
                  <rect key={x * y} x={x} y={y} width="4" height="3" fill="none" stroke="#ff0000" />
                ))}
                <circle cx="83" cy="151" r="1.800" fill="#000" />
                <path d="M154 169C140 166 125 166 115 167C111 170 112 176 115 180C117 183 119 184 122 185" stroke="#000" strokeWidth="3" fill="none" />
              </svg>
              <div className="absolute top-[861px] left-[28px] flex items-center text-[9px] font-bold whitespace-nowrap text-[#e8e8e8]">
                <span>类型</span>
                <span className="ml-[2px] font-['Liberation_Sans'] text-[11px] font-normal">·ASSEM</span>
                <span className="ml-[14px]">名称</span>
                <span className="ml-[2px] font-['Liberation_Sans'] text-[11px] font-normal tracking-[0.300px]">·ASM0004</span>
                <span className="ml-[14px]">尺寸</span>
                <span className="ml-[2px] font-['Liberation_Sans'] text-[11px] font-normal">·A4</span>
              </div>
            </div>
            <RightBar />
          </div>
          <div className="relative flex h-[63px] shrink-0 flex-col justify-end border-b border-[#999] bg-[#ffffcc] pb-[1px] pl-[1px] text-[14px] leading-[16px] tracking-[0.300px] whitespace-nowrap">
            <div className="-ml-[3px]">视图的中心点。</div>
            <div className="-ml-[3px]">不存在于模型中，用视图中心为原点。</div>
            <div className="-ml-[3px]">差在阵列中</div>
            <div className="absolute top-[4px] right-[1px] flex w-[18px] flex-col items-stretch">
              <span className="flex h-[19px] items-center justify-center border-b border-white bg-[#c8c8f8]">
                <svg width="12" height="8" viewBox="0 0 12 8">
                  <path d="M1 7l5-5 5 5" stroke="#2a5a9a" strokeWidth="2" fill="none" />
                </svg>
              </span>
              <span className="mt-[7px] h-[10px] bg-[repeating-linear-gradient(#c8c8f8_0_1px,#fff_1px_2px)]" />
              <span className="mt-[3px] flex h-[19px] items-center justify-center bg-[#c8c8f8]">
                <svg width="12" height="8" viewBox="0 0 12 8">
                  <path d="M1 1l5 5 5-5" stroke="#2a5a9a" strokeWidth="2" fill="none" />
                </svg>
              </span>
            </div>
          </div>
          <div className="flex h-[23px] shrink-0 items-stretch border-t border-white bg-[#ffffcc]">
            <div className="ml-[1467px] w-[92px] bg-[repeating-conic-gradient(#c4c0b8_0_25%,#d4d0cc_0_50%)] bg-[length:2px_2px]" />
            <div className="my-px ml-[4px] flex w-[228px] items-center justify-end border border-[#7f9fc8] bg-white pr-[6px]">
              <svg width="12" height="8" viewBox="0 0 12 8">
                <path d="M1 1l5 5 5-5" stroke="#2a5a7a" strokeWidth="2" fill="none" />
              </svg>
            </div>
          </div>
        </div>
        <div className="w-[13px] bg-[repeating-conic-gradient(#232323_0_25%,#474747_0_50%)] bg-[length:2px_2px]" />
      </div>
      <Taskbar />

      <Dialog />

      <div className="absolute top-[1015px] left-[1709px] h-[26px] w-[138px] bg-white/25" />

      <svg width="1920" height="1080" viewBox="0 0 1920 1080" className="pointer-events-none absolute inset-0">
        <defs>
          <filter id="rough" x="-5%" y="-20%" width="110%" height="140%">
            <feTurbulence type="fractalNoise" baseFrequency="0.55" numOctaves="2" seed="4" />
            <feDisplacementMap in="SourceGraphic" scale="7" />
          </filter>
        </defs>
        <polyline points={scribble} fill="none" stroke="#f40000" strokeWidth="8" strokeLinejoin="round" filter="url(#rough)" />
        <ellipse cx="1730" cy="1035" rx="14" ry="22" transform="rotate(-30 1730 1035)" fill="none" stroke="#6f88a8" strokeWidth="4" opacity="0.8" />
        <ellipse cx="1758" cy="1050" rx="9" ry="17" fill="none" stroke="#d06878" strokeWidth="3" opacity="0.7" />
      </svg>

      <div className="absolute top-[995px] left-[1629px] flex h-[28px] w-[153px] flex-col overflow-hidden rounded-[6px] border-[3px] border-[#c8c4c0] bg-[#ffffcc]">
        <div className="relative mt-[5px] flex h-[10px] shrink-0 items-center bg-[#c8f0e8] text-[11px] text-[#203060]">
          <svg width="10" height="12" viewBox="0 0 10 12" className="ml-[7px] shrink-0">
            <path d="M5 1v9M1 6l4 4 4-4" stroke="#20a020" strokeWidth="2" fill="none" />
          </svg>
          <span className="ml-[15px]">0K/S</span>
          <svg width="10" height="12" viewBox="0 0 10 12" className="ml-[3px] shrink-0">
            <path d="M5 11V2M1 6l4-4 4 4" stroke="#f0a020" strokeWidth="2" fill="none" />
          </svg>
          <span className="ml-[16px]">0K/S</span>
          <span className="ml-[6px] flex h-[18px] w-[18px] shrink-0 items-center justify-center rounded-full bg-[#dff0ff] text-[14px] font-bold text-[#2060c0]">e</span>
        </div>
        <div className="flex-1 bg-[#ccccf4]" />
      </div>

      <div className="absolute top-[1015px] left-[1780px] font-['Noto_Sans_CJK_SC'] text-[29px] leading-[34px] font-bold whitespace-nowrap text-[#74c78c]/80">野火论坛</div>
      <div className="absolute top-[1055px] left-[1767px] font-['Liberation_Sans'] text-[14px] tracking-[0.500px] whitespace-nowrap text-[#3d8fe0]/70">www.proewildfire.cn</div>
    </div>
  )
}
